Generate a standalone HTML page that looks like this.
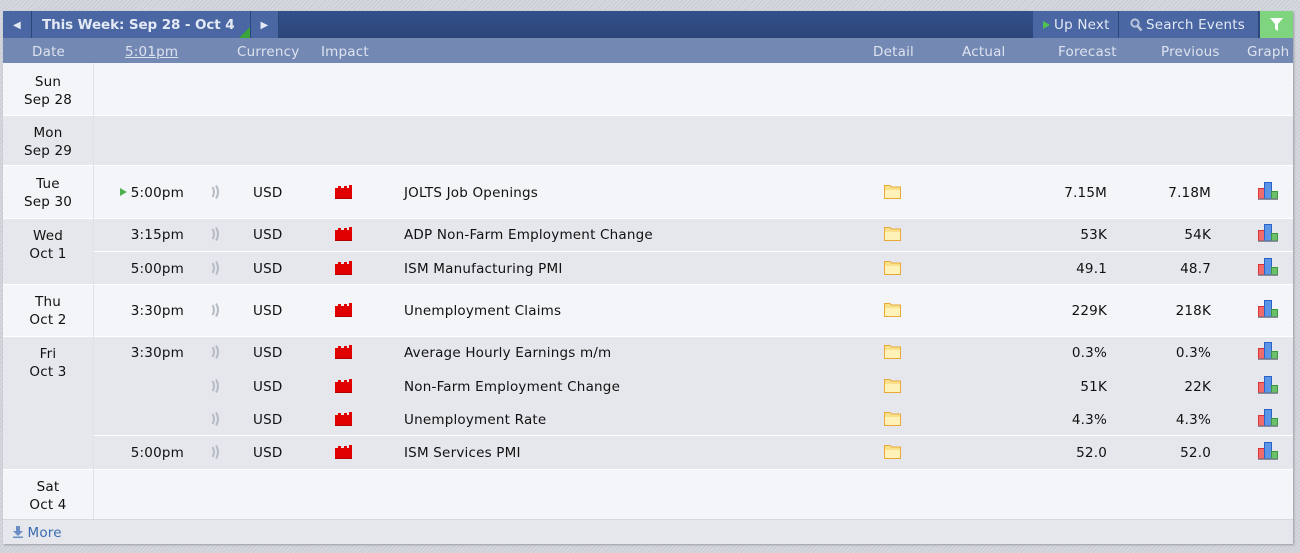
<!DOCTYPE html>
<html><head><meta charset="utf-8"><style>
*{margin:0;padding:0;box-sizing:border-box}
body{width:1300px;height:553px;overflow:hidden;position:relative;font-family:"DejaVu Sans","Liberation Sans",sans-serif;font-size:13.5px;letter-spacing:0.2px;color:#111;
background:repeating-linear-gradient(135deg,#d5d8de 0 2px,#c9ccd3 2px 3px)}
.a{position:absolute;white-space:nowrap}
#box{position:absolute;left:3px;top:11px;width:1290px;height:533px;background:#f4f5f9;box-shadow:1px 1px 2px #9a9ca2;overflow:hidden}
.bar{position:absolute;left:0;top:0;width:1290px;height:27px;background:linear-gradient(#34508a,#2c467a)}
.tab{position:absolute;top:0;height:27px;background:#4a67a3;border-right:1px solid #2c467a;color:#e4eaf5;font-size:13.5px;line-height:29px}
.ch{position:absolute;left:0;top:27px;width:1290px;height:25px;background:#7488b4;color:#dde3ee;font-size:13.5px;line-height:28px}
.g{background:#e6e7ec}
.t{line-height:18px}
.c{text-align:center}
.r{text-align:right}
</style></head><body>
<div id="box">
<div class="bar"></div>
<div class="tab" style="left:0;width:29px;text-align:center;font-size:10px">◀</div>
<div class="tab" style="left:29px;width:219px;font-weight:bold;padding-left:10px;letter-spacing:-0.1px;overflow:hidden">This Week: Sep 28 - Oct 4</div>
<div style="position:absolute;left:236px;top:16px;width:0;height:0;border-left:11px solid transparent;border-bottom:11px solid #3aa63a"></div>
<div class="tab" style="left:248px;width:28px;text-align:center;font-size:10px">▶</div>
<div class="tab" style="left:1030px;width:86px;padding-left:21px"><span style="position:absolute;left:10px;top:10px;border-left:7px solid #4fc24f;border-top:4px solid transparent;border-bottom:4px solid transparent"></span>Up Next</div>
<div class="tab" style="left:1116px;width:140px;padding-left:27px"><svg style="position:absolute;left:11px;top:7px" width="13" height="14" viewBox="0 0 13 14"><circle cx="5" cy="5" r="3.6" fill="none" stroke="#b8c4dc" stroke-width="2"/><path d="M7.5 8 L11.5 12.5" stroke="#b8c4dc" stroke-width="2.6"/></svg>Search Events</div>
<div style="position:absolute;left:1257px;top:0;width:33px;height:27px;background:#7fd47f"><svg style="position:absolute;left:10px;top:7px" width="13" height="13" viewBox="0 0 13 13"><path d="M0 0H13L8 6V13L5 11V6Z" fill="#fff"/></svg></div>
<div class="ch">
<span class="a" style="left:29px">Date</span>
<span class="a" style="left:122px;text-decoration:underline">5:01pm</span>
<span class="a" style="left:234px">Currency</span>
<span class="a" style="left:318px">Impact</span>
<span class="a" style="left:870px">Detail</span>
<span class="a" style="left:959px">Actual</span>
<span class="a" style="left:1055px">Forecast</span>
<span class="a" style="left:1158px">Previous</span>
<span class="a" style="left:1244px">Graph</span>
</div>
<div class="a g" style="left:0;top:104px;width:1290px;height:50px"></div>
<div class="a g" style="left:0;top:207px;width:1290px;height:66px"></div>
<div class="a g" style="left:0;top:325px;width:1290px;height:133px"></div>
<div class="a g" style="left:0;top:508px;width:1290px;height:25px;border-top:1px solid #d6d8de"></div>
<div class="a" style="left:0;top:104px;width:1290px;height:1px;background:#fff"></div>
<div class="a" style="left:0;top:154px;width:1290px;height:1px;background:#fff"></div>
<div class="a" style="left:0;top:207px;width:1290px;height:1px;background:#fff"></div>
<div class="a" style="left:91px;top:240px;width:1199px;height:1px;background:#fff"></div>
<div class="a" style="left:0;top:273px;width:1290px;height:1px;background:#fff"></div>
<div class="a" style="left:0;top:325px;width:1290px;height:1px;background:#fff"></div>
<div class="a" style="left:91px;top:424px;width:1199px;height:1px;background:#fff"></div>
<div class="a" style="left:0;top:458px;width:1290px;height:1px;background:#fff"></div>
<div class="a" style="left:90px;top:52px;width:1px;height:456px;background:#e0e1e6"></div>

<div class="a t c" style="left:0;width:90px;top:62px">Sun<br>Sep 28</div>
<div class="a t c" style="left:0;width:90px;top:113px">Mon<br>Sep 29</div>
<div class="a t c" style="left:0;width:90px;top:164px">Tue<br>Sep 30</div>
<div class="a t c" style="left:0;width:90px;top:216px">Wed<br>Oct 1</div>
<div class="a t c" style="left:0;width:90px;top:282px">Thu<br>Oct 2</div>
<div class="a t c" style="left:0;width:90px;top:334px">Fri<br>Oct 3</div>
<div class="a t c" style="left:0;width:90px;top:467px">Sat<br>Oct 4</div>

<div id="rows"></div>
<div class="a" style="left:10px;top:514px;color:#3a6bb0;font-size:13.5px"><svg width="10" height="12" viewBox="0 0 10 12" style="vertical-align:-1px"><path d="M3 0H7V5H10L5 10L0 5H3Z M0 10.5H10V12H0Z" fill="#6b8fc4"/></svg> More</div>
</div>
<script>
var rows=[[192,"5:00pm","JOLTS Job Openings","7.15M","7.18M",1],
[234,"3:15pm","ADP Non-Farm Employment Change","53K","54K"],
[268,"5:00pm","ISM Manufacturing PMI","49.1","48.7"],
[310,"3:30pm","Unemployment Claims","229K","218K"],
[352,"3:30pm","Average Hourly Earnings m/m","0.3%","0.3%"],
[386,"","Non-Farm Employment Change","51K","22K"],
[419,"","Unemployment Rate","4.3%","4.3%"],
[452,"5:00pm","ISM Services PMI","52.0","52.0"]];
var h="";
rows.forEach(function(r){var y=r[0]-11,t=y-8;
if(r[5])h+='<span class="a" style="left:117px;top:'+(y-4)+'px;border-left:7px solid #4fb04f;border-top:4px solid transparent;border-bottom:4px solid transparent"></span>';
h+='<span class="a t r" style="left:100px;width:81px;top:'+t+'px">'+r[1]+'</span>';
h+='<svg class="a" style="left:208px;top:'+(y-7)+'px" width="10" height="14" viewBox="0 0 10 14"><path d="M1.5 2Q4.5 7 1.5 12" stroke="#b5bcc6" stroke-width="2" fill="none"/><path d="M5 0.5Q9 7 5 13.5" stroke="#b5bcc6" stroke-width="2" fill="none"/></svg>';
h+='<span class="a t" style="left:250px;top:'+t+'px">USD</span>';
h+='<svg class="a" style="left:332px;top:'+(y-7)+'px" width="17" height="14" viewBox="0 0 17 14"><path d="M0 3H3V1H6V3H9V1H12V3H14V0H17V14H0Z" fill="#e10000"/><path d="M0 13H17V14H0Z" fill="#b00000"/></svg>';
h+='<span class="a t" style="left:401px;top:'+t+'px">'+r[2]+'</span>';
h+='<svg class="a" style="left:881px;top:'+(y-7)+'px" width="17" height="14" viewBox="0 0 17 14"><path d="M0.5 0.5H6L7.5 2H16.5V13.5H0.5Z" fill="#fbe08a" stroke="#e8a93a"/><path d="M1 5H16V13H1Z" fill="#fff2b8"/></svg>';
h+='<span class="a t r" style="left:1004px;width:100px;top:'+t+'px">'+r[3]+'</span>';
h+='<span class="a t r" style="left:1108px;width:100px;top:'+t+'px">'+r[4]+'</span>';
h+='<svg class="a" style="left:1255px;top:'+(y-10)+'px" width="20" height="18" viewBox="0 0 20 18"><rect x="0.5" y="6.5" width="6" height="10" fill="#f06b6b" stroke="#d33"/><rect x="6.5" y="0.5" width="7" height="16" fill="#5b95e8" stroke="#2a63c8"/><rect x="13.5" y="9.5" width="6" height="7" fill="#6cc06c" stroke="#3a9a3a"/><rect x="0" y="16.5" width="20" height="1.5" fill="#8a8fa0"/></svg>';
});
document.getElementById("rows").innerHTML=h;
</script>
</body></html>
